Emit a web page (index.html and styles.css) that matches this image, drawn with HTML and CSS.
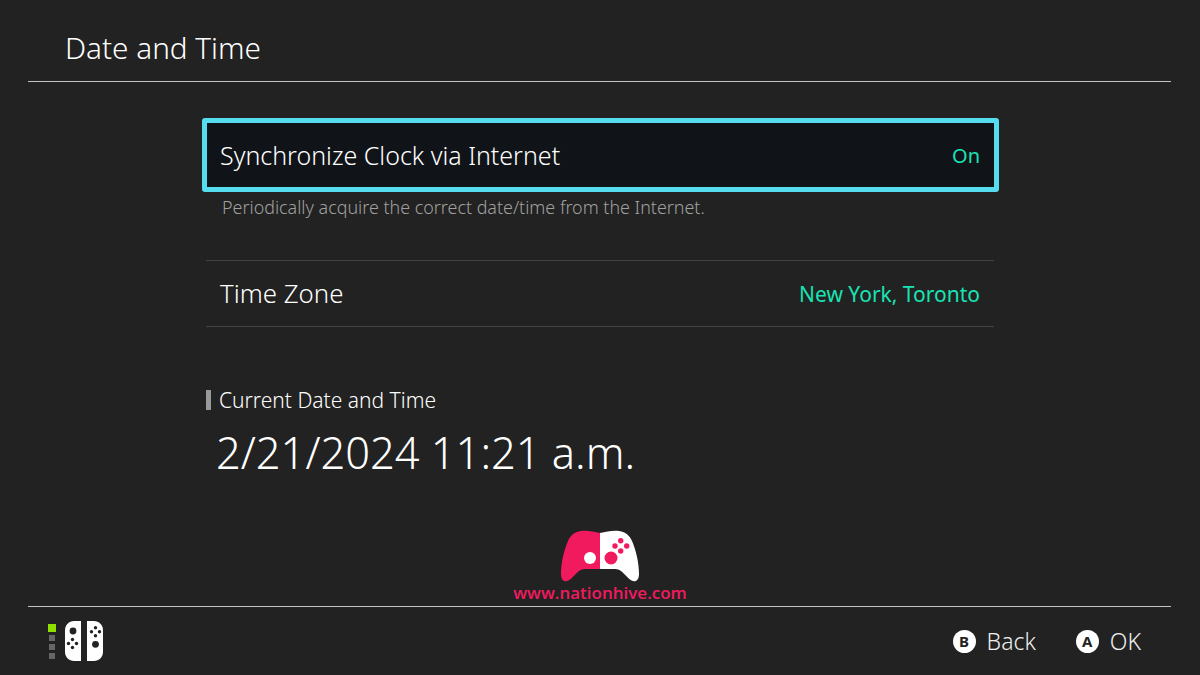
FILE: index.html
```html
<!DOCTYPE html>
<html lang="en">
<head>
    <meta charset="UTF-8">
    <title>Date and Time</title>
    <link rel="stylesheet" href="styles.css">
</head>
<body>
    <div class="screen">
        <header class="top-bar">
            <h1>Date and Time</h1>
        </header>

        <main class="content">
            <div class="row selected">
                <span class="row-label">Synchronize Clock via Internet</span>
                <span class="row-value">On</span>
            </div>
            <p class="row-help">Periodically acquire the correct date/time from the Internet.</p>

            <div class="row plain">
                <span class="row-label">Time Zone</span>
                <span class="row-value">New York, Toronto</span>
            </div>

            <h2 class="section-title">Current Date and Time</h2>
            <div class="clock">2/21/2024 11:21 a.m.</div>
        </main>

        <div class="watermark">
            <svg width="80" height="54" viewBox="0 0 80 54">
                <path class="pad-left" d="M40 3C34 2 27 0 21 1C14 2 10 6 8 11C4 20 1 33 1 44C1 50 4 52 7 51C11 50 15 44 19 41C22 39 24 39 27 39H40Z"/>
                <path class="pad-right" d="M40 3C46 2 53 0 59 1C66 2 70 6 72 11C76 20 79 33 79 44C79 50 76 52 73 51C69 50 65 44 61 41C58 39 56 39 53 39H40Z"/>
                <circle class="dot-white" cx="30" cy="28" r="6"/>
                <circle class="dot-pink" cx="51" cy="28" r="6.500"/>
                <circle class="dot-pink" cx="60.700" cy="10.700" r="2.700"/>
                <circle class="dot-pink" cx="55" cy="16" r="2.700"/>
                <circle class="dot-pink" cx="66.700" cy="16" r="2.700"/>
                <circle class="dot-pink" cx="60.700" cy="21" r="2.700"/>
            </svg>
            <span class="watermark-url">www.nationhive.com</span>
        </div>

        <footer class="bottom-bar">
            <div class="controller">
                <div class="player-dots">
                    <i class="lit"></i><i></i><i></i><i></i>
                </div>
                <svg width="38" height="40" viewBox="0 0 38 40">
                    <path fill="#fff" d="M16 0V40H9C4 40 0 36 0 31V9C0 4 4 0 9 0Z"/>
                    <path fill="#fff" d="M22 0V40H29C34 40 38 36 38 31V9C38 4 34 0 29 0Z"/>
                    <g fill="#222">
                        <circle cx="8" cy="10" r="3.400"/>
                        <circle cx="7.500" cy="18.500" r="1.700"/><circle cx="7.500" cy="26.500" r="1.700"/>
                        <circle cx="3.500" cy="22.500" r="1.700"/><circle cx="11.500" cy="22.500" r="1.700"/>
                        <circle cx="30.500" cy="6.700" r="1.700"/><circle cx="30.500" cy="14.700" r="1.700"/>
                        <circle cx="26.500" cy="10.700" r="1.700"/><circle cx="34.500" cy="10.700" r="1.700"/>
                        <circle cx="30.500" cy="23.300" r="3.400"/>
                    </g>
                </svg>
            </div>
            <div class="hints">
                <span class="hint"><b class="btn">B</b>Back</span>
                <span class="hint"><b class="btn">A</b>OK</span>
            </div>
        </footer>
    </div>
</body>
</html>
```

FILE: styles.css
```css
body {
    margin: 0;
    background-color: #222;
    font-family: "Noto Sans", Arial, sans-serif;
    font-weight: 300;
    color: #fff;
}
.screen {
    position: relative;
    width: 1200px;
    height: 675px;
    padding: 0 29px 0 28px;
    box-sizing: border-box;
    overflow: hidden;
    display: flex;
    flex-direction: column;
}
.top-bar {
    height: 81px;
    flex-shrink: 0;
    border-bottom: 1px solid #c4c4c4;
    display: flex;
    align-items: center;
    padding-left: 37px;
}
.top-bar h1 {
    margin: 14px 0 0;
    font-size: 29.700px;
    font-weight: 300;
}
.content {
    flex: 1;
    padding: 36px 177px 0 178px;
}
.row {
    display: flex;
    justify-content: space-between;
    align-items: center;
    font-size: 25px;
}
.row-value {
    font-size: 21px;
    font-weight: 400;
    color: #19e3b4;
}
.selected {
    height: 74px;
    margin: 0 -5px 0 -4px;
    padding: 0 14px 0 13px;
    box-sizing: border-box;
    border: 5px solid #55dcef;
    border-radius: 3px;
    background-color: #101418;
}
.selected .row-value {
    font-size: 20px;
}
.row-help {
    margin: 3px 0 0 16px;
    height: 65px;
    font-size: 17.900px;
    line-height: 24px;
    color: #a0a0a0;
}
.plain {
    height: 63px;
    padding: 0 14px 2px;
    border-top: 1px solid #444;
    border-bottom: 1px solid #444;
}
.plain .row-label {
    font-size: 25.800px;
}
.plain .row-value {
    padding-top: 2px;
}
.section-title {
    margin: 63px 0 0;
    height: 20px;
    padding-left: 8px;
    border-left: 5px solid #999;
    font-size: 21px;
    font-weight: 300;
    line-height: 20px;
}
.clock {
    margin: 15px 0 0 10px;
    font-size: 43.400px;
    line-height: 56px;
}
.watermark {
    position: absolute;
    left: 500px;
    top: 530px;
    width: 200px;
    display: flex;
    flex-direction: column;
    align-items: center;
}
.pad-left { fill: #f21a5f; }
.pad-right { fill: #fff; }
.dot-white { fill: #fff; }
.dot-pink { fill: #f21a5f; }
.watermark-url {
    margin-top: -1px;
    font-family: "Open Sans", sans-serif;
    font-size: 17px;
    font-weight: 600;
    line-height: 20px;
    color: #f21a5f;
}
.bottom-bar {
    height: 68px;
    flex-shrink: 0;
    border-top: 1px solid #c4c4c4;
    display: flex;
    justify-content: space-between;
    align-items: center;
    padding: 0 30px 0 20px;
}
.controller {
    display: flex;
    align-items: center;
    gap: 9px;
}
.player-dots {
    display: flex;
    flex-direction: column;
    align-items: center;
    gap: 3px;
}
.player-dots i {
    display: block;
    width: 6px;
    height: 6px;
    background-color: #666;
}
.player-dots .lit {
    width: 8px;
    height: 8px;
    background-color: #8fe000;
}
.hints {
    display: flex;
    gap: 40px;
}
.hint {
    display: flex;
    align-items: center;
    gap: 11px;
    font-size: 23px;
    color: #eee;
}
.btn {
    width: 23px;
    height: 23px;
    border-radius: 50%;
    background-color: #fff;
    color: #222;
    font-size: 15px;
    font-weight: 700;
    display: flex;
    align-items: center;
    justify-content: center;
}
```
